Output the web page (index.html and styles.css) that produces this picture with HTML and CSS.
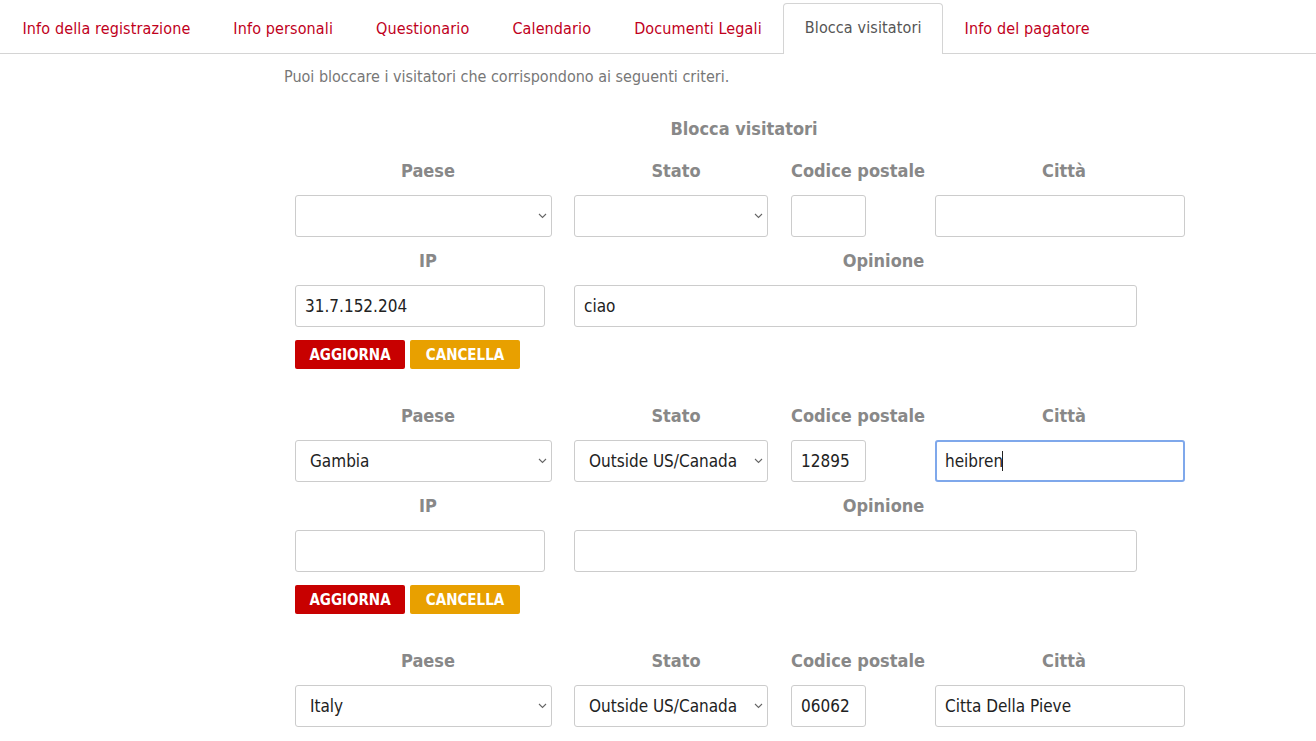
FILE: index.html
```html
<!DOCTYPE html>
<html lang="it">
<head>
    <meta charset="UTF-8">
    <title>Blocca visitatori</title>
    <link rel="stylesheet" href="styles.css">
</head>
<body>

    <!-- Tabs -->
    <div class="tabs">
        <a href="#" class="tab">Info della registrazione</a>
        <a href="#" class="tab">Info personali</a>
        <a href="#" class="tab">Questionario</a>
        <a href="#" class="tab">Calendario</a>
        <a href="#" class="tab">Documenti Legali</a>
        <a href="#" class="tab active">Blocca visitatori</a>
        <a href="#" class="tab">Info del pagatore</a>
    </div>

    <div class="content">
        <p class="intro">Puoi bloccare i visitatori che corrispondono ai seguenti criteri.</p>

        <div class="block-list">
            <h3 class="block-title">Blocca visitatori</h3>

            <!-- Rule 1 -->
            <div class="rule">
                <div class="label">Paese</div>
                <div class="label">Stato</div>
                <div class="label">Codice postale</div>
                <div class="label last">Città</div>
                <div class="cell"><select class="sel sel-country"><option></option></select><svg class="chev" width="9" height="6" viewBox="0 0 9 6"><path d="M1 1l3.5 3.5L8 1" fill="none" stroke="#666" stroke-width="1.1"/></svg></div>
                <div class="cell"><select class="sel sel-state"><option></option></select><svg class="chev" width="9" height="6" viewBox="0 0 9 6"><path d="M1 1l3.5 3.5L8 1" fill="none" stroke="#666" stroke-width="1.1"/></svg></div>
                <div class="cell"><input type="text" class="inp inp-zip"></div>
                <div class="cell"><input type="text" class="inp inp-city"></div>
                <div class="label ip">IP</div>
                <div class="label ip span3">Opinione</div>
                <div class="cell"><input type="text" class="inp inp-ip" value="31.7.152.204"></div>
                <div class="cell span3"><input type="text" class="inp inp-note" value="ciao"></div>
                <div class="actions">
                    <button class="btn btn-update">AGGIORNA</button>
                    <button class="btn btn-cancel">CANCELLA</button>
                </div>
            </div>

            <!-- Rule 2 -->
            <div class="rule">
                <div class="label">Paese</div>
                <div class="label">Stato</div>
                <div class="label">Codice postale</div>
                <div class="label last">Città</div>
                <div class="cell"><select class="sel sel-country"><option>Gambia</option></select><svg class="chev" width="9" height="6" viewBox="0 0 9 6"><path d="M1 1l3.5 3.5L8 1" fill="none" stroke="#666" stroke-width="1.1"/></svg></div>
                <div class="cell"><select class="sel sel-state"><option>Outside US/Canada</option></select><svg class="chev" width="9" height="6" viewBox="0 0 9 6"><path d="M1 1l3.5 3.5L8 1" fill="none" stroke="#666" stroke-width="1.1"/></svg></div>
                <div class="cell"><input type="text" class="inp inp-zip" value="12895"></div>
                <div class="cell"><input type="text" class="inp inp-city focused" value="heibren"><span class="caret"></span></div>
                <div class="label ip">IP</div>
                <div class="label ip span3">Opinione</div>
                <div class="cell"><input type="text" class="inp inp-ip"></div>
                <div class="cell span3"><input type="text" class="inp inp-note"></div>
                <div class="actions">
                    <button class="btn btn-update">AGGIORNA</button>
                    <button class="btn btn-cancel">CANCELLA</button>
                </div>
            </div>

            <!-- Rule 3 -->
            <div class="rule">
                <div class="label">Paese</div>
                <div class="label">Stato</div>
                <div class="label">Codice postale</div>
                <div class="label last">Città</div>
                <div class="cell"><select class="sel sel-country"><option>Italy</option></select><svg class="chev" width="9" height="6" viewBox="0 0 9 6"><path d="M1 1l3.5 3.5L8 1" fill="none" stroke="#666" stroke-width="1.1"/></svg></div>
                <div class="cell"><select class="sel sel-state"><option>Outside US/Canada</option></select><svg class="chev" width="9" height="6" viewBox="0 0 9 6"><path d="M1 1l3.5 3.5L8 1" fill="none" stroke="#666" stroke-width="1.1"/></svg></div>
                <div class="cell"><input type="text" class="inp inp-zip" value="06062"></div>
                <div class="cell"><input type="text" class="inp inp-city" value="Citta Della Pieve"></div>
            </div>
        </div>
    </div>

</body>
</html>
```

FILE: styles.css
```css
body {
    font-family: "DejaVu Sans Condensed", "DejaVu Sans", sans-serif;
    background: #fff;
    margin: 0;
    padding: 0;
    color: #222;
}
/* Tabs */
.tabs {
    display: flex;
    align-items: flex-end;
    height: 53px;
    border-bottom: 1px solid #d4d4d4;
    padding-left: 1px;
}
.tab {
    display: block;
    padding: 0 20.5px;
    height: 49px;
    line-height: 47px;
    font-size: 16px;
    letter-spacing: 0.12px;
    color: #c0001c;
    text-decoration: none;
    border: 1px solid transparent;
    border-bottom: none;
    margin-bottom: -1px;
}
.tab.active {
    color: #555;
    background: #fff;
    border-color: #d4d4d4;
    border-radius: 4px 4px 0 0;
    height: 50px;
}
/* Content */
.content {
    margin-left: 284px;
}
.intro {
    margin: 13px 0 0 0;
    font-size: 16px;
    color: #777;
}
.block-list {
    width: 898px;
    margin-left: 11px;
}
.block-title {
    text-align: center;
    font-size: 18px;
    color: #888;
    margin: 32px 0 8px 0;
    line-height: 22px;
}
.rule {
    display: grid;
    grid-template-columns: 279px 217px 144px 258px;
    margin-bottom: 24px;
}
.label {
    box-sizing: border-box;
    text-align: center;
    white-space: nowrap;
    font-size: 18px;
    font-weight: bold;
    color: #888;
    height: 22px;
    line-height: 22px;
    margin-top: 12px;
    margin-bottom: 13px;
    padding-right: 13px;
}
.label.ip {
    margin-top: 13px;
}
.label.last, .label.span3 {
    padding-right: 0;
}
.span3 {
    grid-column: span 3;
}
.cell {
    position: relative;
}
.sel, .inp {
    box-sizing: border-box;
    height: 42px;
    border: 1px solid #ccc;
    border-radius: 3px;
    background: #fff;
    font-family: inherit;
    font-size: 17px;
    color: #222;
    margin: 0;
}
.inp {
    padding: 0 9px;
}
.sel {
    appearance: none;
    -webkit-appearance: none;
    padding: 0 28px 0 14px;
}
.chev {
    position: absolute;
    top: 18px;
    left: 0;
    pointer-events: none;
}
.cell:nth-child(5) .chev {
    left: 243px;
}
.cell:nth-child(6) .chev {
    left: 180px;
}
.sel-country { width: 257px; }
.sel-state { width: 194px; }
.inp-zip { width: 75px; }
.inp-city { width: 250px; }
.inp-ip { width: 250px; }
.inp-note { width: 563px; }
.inp.focused {
    border: 2px solid #7fa8eb;
    padding: 0 8px;
    outline: none;
}
.caret {
    position: absolute;
    left: 67px;
    top: 11px;
    width: 1px;
    height: 20px;
    background: #222;
}
.actions {
    grid-column: 1 / -1;
    display: flex;
    gap: 5px;
    margin-top: 13px;
}
.btn {
    width: 110px;
    height: 29px;
    border: none;
    border-radius: 2px;
    color: #fff;
    font-family: inherit;
    font-size: 15px;
    font-weight: bold;
    padding: 0;
    cursor: pointer;
}
.btn-update {
    background: #c80000;
}
.btn-cancel {
    background: #e8a000;
}
```
